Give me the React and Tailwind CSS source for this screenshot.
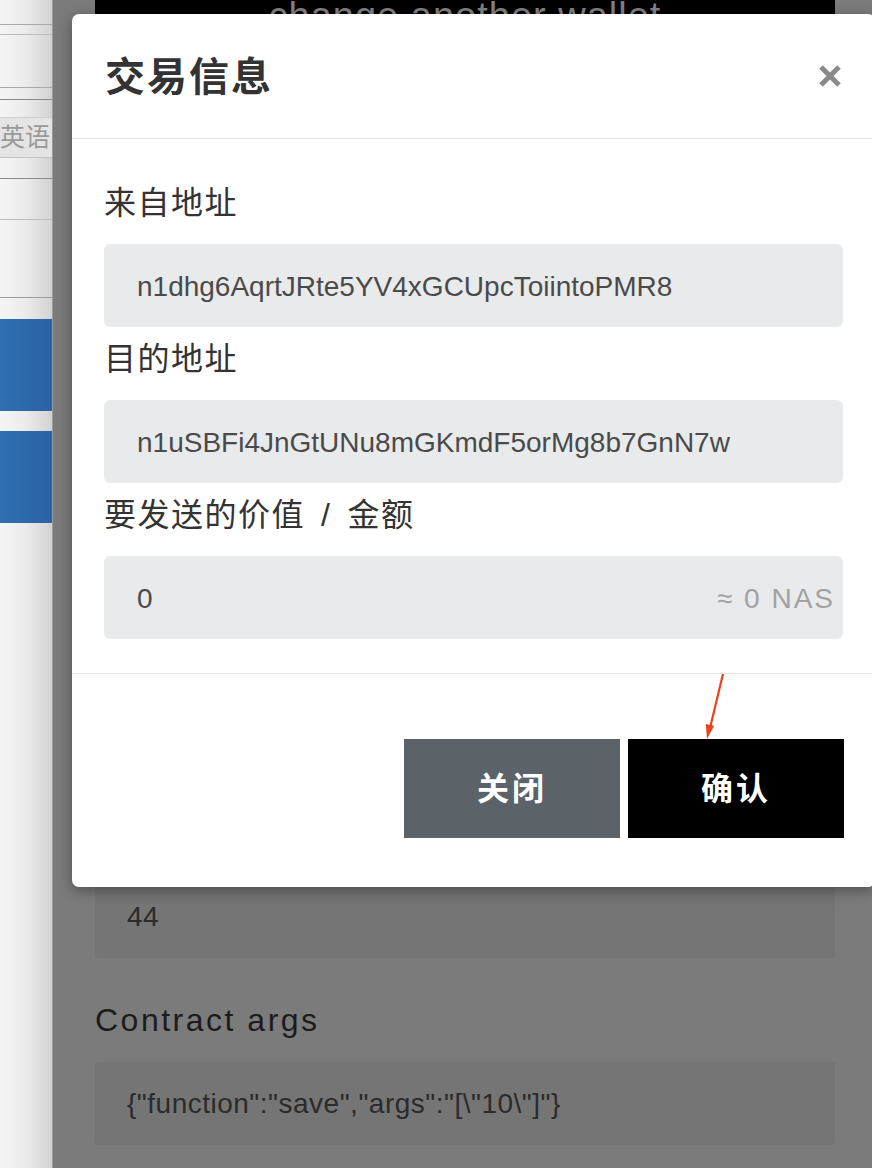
const cjk = "font-['Liberation_Sans','Noto_Sans_CJK_SC',sans-serif]";

function SideRow({ h, line, children, className = '' }) {
  return (
    <div className={`${h} border-b ${line} ${className}`}>{children}</div>
  );
}

function Sidebar() {
  return (
    <aside className={`w-[53px] shrink-0 border-r border-[#9a9a9a] bg-linear-to-r from-[#f5f5f5] via-[#ebebeb] to-[#d2d2d2] ${cjk}`}>
      <SideRow h="h-[25px]" line="border-[#a9a9a9]" />
      <SideRow h="h-[10px]" line="border-[#bdbdbd]" />
      <SideRow h="h-[53px]" line="border-[#a9a9a9]" />
      <SideRow h="h-[12px]" line="border-[#8a8a8a]" />
      <SideRow h="h-[18px]" line="border-[#cfcfcf]" />
      <SideRow
        h="h-[40px]"
        line="border-[#c4c4c4]"
        className="flex items-center overflow-hidden bg-[#e4e4e4] text-[25px] leading-none text-[#9a9a9a] whitespace-nowrap"
      >
        英语
      </SideRow>
      <SideRow h="h-[21px]" line="border-[#8a8a8a]" />
      <SideRow h="h-[41px]" line="border-[#bdbdbd]" />
      <SideRow h="h-[78px]" line="border-[#9c9c9c]" />
      <div className="h-[21px]" />
      <div className="h-[92px] bg-linear-to-r from-[#2f6fb2] to-[#2a63a3]" />
      <div className="h-[20px]" />
      <div className="h-[92px] bg-linear-to-r from-[#2f6fb2] to-[#2a63a3]" />
    </aside>
  );
}

function Field({ children, right }) {
  return (
    <div className="mt-[21px] flex h-[83px] items-center justify-between rounded-[6px] bg-[#e9eaec] pl-[33px] pr-[8px] pt-[3px] font-['Liberation_Sans',sans-serif] text-[28px] text-[#4a4a4a]">
      <span>{children}</span>
      {right && <span className="tracking-[2px] text-[#a2a2a2]">{right}</span>}
    </div>
  );
}

function Label({ children, first }) {
  return (
    <div className={`${first ? '' : 'mt-[8px]'} h-[44px] pt-[2px] text-[32px] leading-[44px] tracking-[1.5px] text-[#333]`}>
      {children}
    </div>
  );
}

function Modal() {
  return (
    <div className={`absolute left-[19px] top-[14px] w-[803px] rounded-[7px] bg-white shadow-[0_4px_14px_rgba(0,0,0,0.35)] ${cjk}`}>
      <div className="flex h-[125px] items-center justify-between border-b border-[#e5e5e5] pl-[33px] pr-[33px]">
        <h2 className="pt-[2px] text-[40px] font-bold tracking-[2px] text-[#333]">交易信息</h2>
        <svg width="24" height="24" viewBox="0 0 24 24">
          <path d="M3 3 L21 21 M21 3 L3 21" stroke="#8a8a8a" strokeWidth="5" />
        </svg>
      </div>

      <div className="border-b border-[#e5e5e5] px-[32px] pt-[40px] pb-[34px]">
        <Label first>来自地址</Label>
        <Field>n1dhg6AqrtJRte5YV4xGCUpcToiintoPMR8</Field>
        <Label>目的地址</Label>
        <Field>n1uSBFi4JnGtUNu8mGKmdF5orMg8b7GnN7w</Field>
        <Label>
          要发送的价值<span className="mx-[16px]">/</span>金额
        </Label>
        <Field right="≈ 0 NAS">0</Field>
      </div>

      <div className="flex justify-end gap-[8px] pt-[65px] pb-[49px] pr-[31px]">
        <button className="h-[99px] w-[216px] bg-[#5b6268] text-[32px] font-bold tracking-[3px] text-white">
          关闭
        </button>
        <button className="h-[99px] w-[216px] bg-black text-[32px] font-bold tracking-[3px] text-white">
          确认
        </button>
      </div>
    </div>
  );
}

export default function App() {
  return (
    <div className="flex h-[1168px] w-[872px] overflow-hidden">
      <Sidebar />
      <main className="relative flex-1 bg-[#7b7b7b]">
        <div className="pl-[42px] pr-[37px] font-['Liberation_Sans',sans-serif]">
          <div className="-mt-[3px] h-[60px] bg-black text-center text-[38px] leading-none tracking-[1px] text-[#808080]">
            change another wallet
          </div>

          <div className="mt-[818px] flex h-[83px] items-center rounded-[3px] bg-[#757575] pl-[32px] text-[28px] tracking-[0.5px] text-[#2b2b2b]">
            44
          </div>
          <div className="mt-[40px] h-[44px] text-[32px] leading-[44px] tracking-[2.5px] text-[#1c1c1c]">
            Contract args
          </div>
          <div className="mt-[20px] flex h-[83px] items-center rounded-[3px] bg-[#757575] pl-[32px] text-[28px] tracking-[0.5px] text-[#2b2b2b]">
            {'{"function":"save","args":"[\\"10\\"]"}'}
          </div>
        </div>

        <Modal />

        <svg className="absolute left-[647px] top-[670px]" width="30" height="72" viewBox="0 0 30 72">
          <path d="M23 4 L10 58" stroke="#e8421e" strokeWidth="2.2" />
          <polygon points="7,69 14.2,55.8 5.8,53.9" fill="#e8421e" />
        </svg>
      </main>
    </div>
  );
}
